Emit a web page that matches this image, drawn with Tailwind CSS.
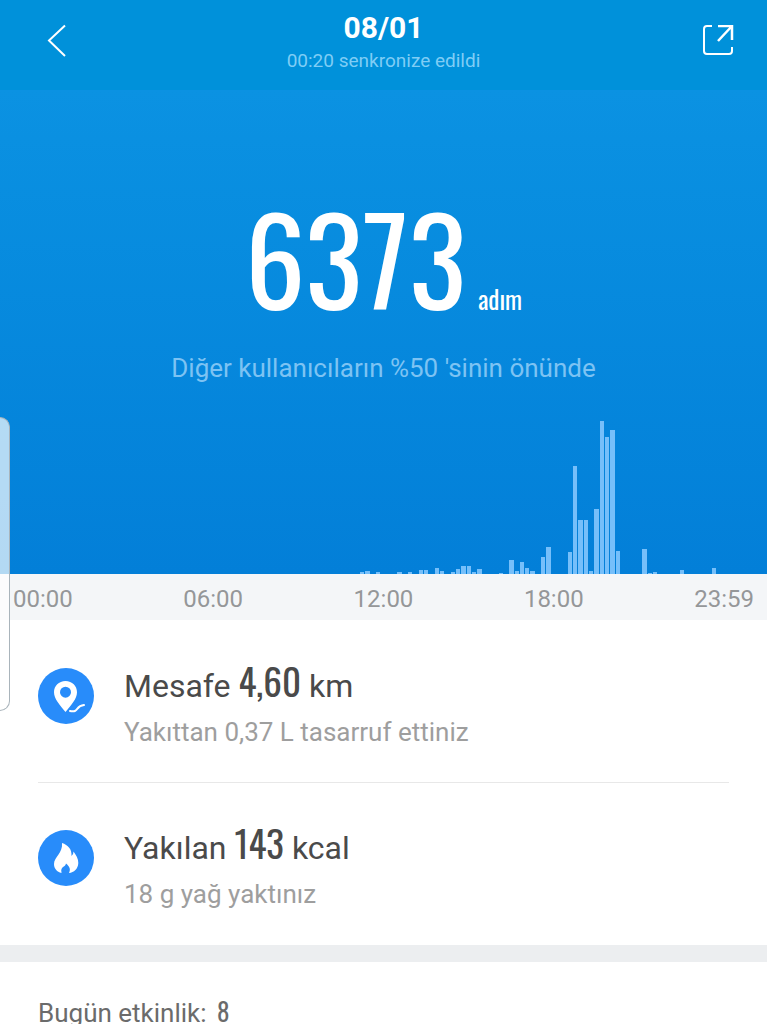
<!DOCTYPE html>
<html lang="tr">

<head>
    <meta charset="UTF-8">
    <meta name="viewport" content="width=device-width, initial-scale=1.0">
    <title>Adım</title>
    <script src="https://cdn.jsdelivr.net/npm/@tailwindcss/browser@4"></script>
</head>

<body class="bg-white">
    <div class="app relative w-full min-h-screen font-['Roboto',sans-serif]">
        <header class="flex h-[90px] items-center justify-between bg-[#0091da] px-[33px]">
            <button type="button" aria-label="Geri" class="-mt-2 flex w-12 justify-center text-white">
                <svg class="h-9 w-6" viewBox="0 0 24 36" fill="none" stroke="currentColor" stroke-width="2">
                    <path d="M20 2.500L4 17.500L20 33" />
                </svg>
            </button>
            <div class="-mt-1 text-center">
                <h1 class="text-[30px] leading-9 font-bold text-white">08/01</h1>
                <p class="text-[19px] leading-[30px] text-[#7fcdf5]">00:20 senkronize edildi</p>
            </div>
            <button type="button" aria-label="Paylaş" class="-mt-2 flex w-12 justify-end text-white">
                <svg class="h-8 w-8" viewBox="0 0 32 32" fill="none" stroke="currentColor" stroke-width="2">
                    <path d="M10 1H5Q2 1 2 4V26Q2 29 5 29H27Q30 29 30 26V22" />
                    <path d="M16 1H30V15M30 1L16 16" stroke-width="2.500" />
                </svg>
            </button>
        </header>

        <!-- steps -->
        <section class="bg-linear-to-b from-[#0b92e2] to-[#037fd8] text-center">
            <div class="flex items-baseline justify-center gap-3 pt-[94px] font-['Oswald','Roboto',sans-serif] text-white">
                <span class="text-[120px] leading-[144px]">6373</span>
                <span class="text-[25px] leading-8">adım</span>
            </div>
            <p class="pt-6 text-[26px] leading-8 text-[#7dc3f3]">Diğer kullanıcıların %50 'sinin önünde</p>
            <div id="chart" class="flex h-[190px] items-end pr-[2px] pl-[3px]"></div>
        </section>
        <div class="flex justify-between bg-[#f4f6f8] px-[13px] pt-[10px] pb-[6px] text-[24px] leading-[30px] text-[#959799]">
            <span>00:00</span>
            <span>06:00</span>
            <span>12:00</span>
            <span>18:00</span>
            <span>23:59</span>
        </div>

        <!-- distance + calories -->
        <section class="px-[38px]">
            <div class="flex h-[162px] items-start gap-[30px] pt-9">
                <svg class="mt-3 h-14 w-14 shrink-0" viewBox="0 0 56 56">
                    <circle cx="28" cy="28" r="28" fill="#288cfa" />
                    <path fill="#fff" fill-rule="evenodd" d="M27.500 13C20.800 13 16 18 16 24.200C16 31 22 37 27.500 44C33 37 39 31 39 24.200C39 18 34.200 13 27.500 13ZM27.500 18.700A5.500 5.500 0 1 1 27.500 29.700A5.500 5.500 0 1 1 27.500 18.700Z" />
                    <path fill="none" stroke="#fff" stroke-width="2" stroke-linecap="round" d="M32 43C41 45 37 38 46 37" />
                </svg>
                <div>
                    <h2 class="text-[32px] leading-[50px] text-[#4a4a4a]">Mesafe <span class="font-['Oswald','Roboto',sans-serif] text-[37px]">4,60</span> km</h2>
                    <p class="text-[26px] leading-[42px] text-[#9e9e9e]">Yakıttan 0,37 L tasarruf ettiniz</p>
                </div>
            </div>
            <hr class="border-[#e8e8e8]">
            <div class="flex h-[162px] items-start gap-[30px] pt-[35px]">
                <svg class="mt-3 h-14 w-14 shrink-0" viewBox="0 0 56 56">
                    <circle cx="28" cy="28" r="28" fill="#288cfa" />
                    <path fill="#fff" d="M24 13C30 15 34 19 33.500 26Q35.500 25 35.500 21.500C38 25 40.500 29 40.300 33C40 39 36 42.500 31 43C33 39 31.500 36.500 28 33.500C27.500 36 26 36 24 38Q22.500 40 23.500 43C19 42 16 38.500 16 34C16 27 25 23 24 13Z" />
                </svg>
                <div>
                    <h2 class="text-[32px] leading-[50px] text-[#4a4a4a]">Yakılan <span class="font-['Oswald','Roboto',sans-serif] text-[37px] tabular-nums">143</span> kcal</h2>
                    <p class="text-[26px] leading-[42px] text-[#9e9e9e]">18 g yağ yaktınız</p>
                </div>
            </div>
        </section>

        <section class="border-t-[17px] border-[#eceef0] px-[38px] pt-[29px]">
            <h3 class="text-[26px] leading-10 text-[#6b6b6b]">Bugün etkinlik: <span class="ml-1 font-['Oswald','Roboto',sans-serif] text-[25px]">8</span></h3>
        </section>

        <!-- edge panel -->
        <div class="absolute top-[417px] left-0 h-[294px] w-[10px] rounded-r-[10px] border border-l-0 border-[#a9b4bb] bg-white/70"></div>
    </div>

    <script>
        // bar heights in px, one slot per 10 minutes
        const steps = {
            67: 2, 68: 3, 70: 2, 74: 2, 76: 2, 78: 4, 79: 4, 81: 6, 82: 3, 84: 2, 85: 5, 86: 8, 87: 8, 88: 2, 89: 5,
            93: 1, 95: 14, 96: 3, 97: 12, 98: 6, 99: 3, 101: 17, 102: 27,
            106: 22, 107: 108, 108: 54, 109: 54, 110: 3, 111: 65, 112: 153, 113: 137, 114: 144, 115: 23,
            120: 25, 121: 1, 122: 2, 127: 4, 133: 6
        }
        let bars = ''
        for (let i = 0; i < 143; i++) {
            bars += `<div class="flex-1 pr-px"><div class="bg-[#76bffa]" style="height:${steps[i] || 0}px"></div></div>`
        }
        document.getElementById('chart').innerHTML = bars
    </script>
</body>

</html>
